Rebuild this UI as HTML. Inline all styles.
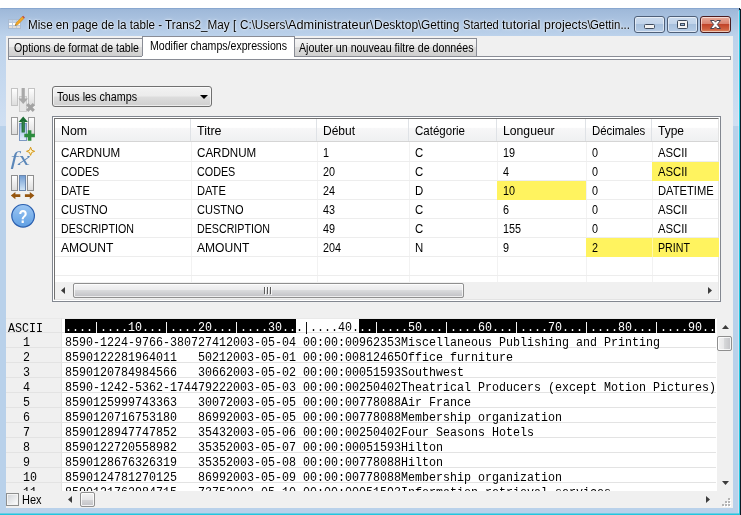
<!DOCTYPE html>
<html><head><meta charset="utf-8">
<style>
*{box-sizing:border-box;margin:0;padding:0}
html,body{width:741px;height:515px;overflow:hidden;background:#fff}
body{position:relative;font-family:"Liberation Sans",sans-serif;font-size:12px;color:#000}
.abs{position:absolute}
#win{will-change:transform;left:0;top:8px;width:741px;height:507px;background:#b9d1ea;border-radius:1px 3px 0 0;overflow:hidden}
#tbar{left:0;top:0;width:741px;height:120px;background:linear-gradient(#9db7d8 0,#bcd2eb 28px,#cfdff2 116px,#cfdff2 118px,#b9d1ea 118px)}
#client{left:6px;top:28px;width:727px;height:472px;background:#f0f0f0;overflow:hidden}
.cb{top:8px;width:31px;height:17px;border:1px solid #4f6079;border-radius:3px;box-shadow:inset 0 0 0 1px rgba(255,255,255,.55);background:linear-gradient(#cbdbee 0,#c2d4ea 45%,#a7c0dd 50%,#b6cce6 100%)}
.cb svg{position:absolute;left:0;top:0}
.tab{top:2px;height:19px;border:1px solid #898c95;border-bottom-color:#898c95;background:linear-gradient(#f5f5f5 0,#ebebeb 50%,#dddddd 50%,#cfcfcf 100%)}
.tab.sel{top:0;height:23px;background:#fff;border-bottom:none;z-index:2}
.t{white-space:pre;transform-origin:0 50%;z-index:3}
.mono{font-family:"Liberation Mono",monospace}
svg{display:block}
</style></head><body>
<div id="win" class="abs">
 <div id="tbar" class="abs"></div>
 <div class="abs" style="left:0;top:0;width:741px;height:1px;background:rgba(120,155,200,.55)"></div>
 <svg class="abs" style="left:8px;top:7px" width="18" height="16" viewBox="0 0 18 16">
  <rect x="0.5" y="4.5" width="12" height="9" fill="#fff" stroke="#a9bbd2"/>
  <rect x="1" y="5" width="11" height="2" fill="#c3d4ea"/>
  <rect x="1" y="11" width="11" height="2" fill="#e3ddd6"/>
  <path d="M4.5 5v8M8.5 5v8M1 7.5h11M1 10.5h11" stroke="#bccadc" fill="none"/>
  <path d="M7.2 10.6l.8-2.6L14.2 1.6l1.8 1.8L9.8 9.8z" fill="#f3a626" stroke="#c08418" stroke-width=".5"/>
  <path d="M14.2 1.6l.9-.9 1.8 1.8-.9.9z" fill="#c4453a"/>
  <path d="M7.2 10.6l.45-1.4.95.95z" fill="#555"/>
 </svg>
 <div class="abs cb" style="left:634px"><svg width="29" height="15"><rect x="9.5" y="7.5" width="10" height="4" rx="1" fill="#f2f2f2" stroke="#3e4a5c"/></svg></div>
 <div class="abs cb" style="left:667px"><svg width="29" height="15"><rect x="9.5" y="3.5" width="10" height="8" rx="1" fill="#f2f2f2" stroke="#3e4a5c"/><rect x="12.5" y="6.5" width="4" height="2" fill="#9db8d8" stroke="#3e4a5c"/></svg></div>
 <div class="abs cb" style="left:700px;background:linear-gradient(#e9ac9c 0,#d98371 45%,#c1442a 50%,#cf5f3f 80%,#dc8a62 100%);border-color:#4b1c20"><svg width="29" height="15"><path d="M9.5 3.5h3.6l1.4 1.7 1.4-1.7h3.6l-3.2 4 3.2 4h-3.6l-1.4-1.7-1.4 1.7h-3.6l3.2-4z" fill="#fff" stroke="#4a4350" stroke-width="1" stroke-linejoin="round"/></svg></div>
 <div id="client" class="abs">
<div class="abs " style="left:2px;top:20px;width:723px;height:4px;border:1px solid #898c95;background:#fff"></div>
<div class="abs tab" style="left:2px;top:2px;width:135px;height:19px;"></div>
<div class="abs tab" style="left:288px;top:2px;width:183px;height:19px;"></div>
<div class="abs tab sel" style="left:136px;top:0px;width:153px;height:21px;"></div>
<div class="abs " style="left:136px;top:20px;width:152px;height:3px;background:#fff;z-index:2"></div>
<div class="abs t" style="left:7.60px;top:4.84px;font-size:12px;line-height:15px;transform:scaleX(0.8839);">Options de format de table</div>
<div class="abs t" style="left:144.20px;top:2.84px;font-size:12px;line-height:15px;transform:scaleX(0.8816);">Modifier champs/expressions</div>
<div class="abs t" style="left:292.80px;top:4.84px;font-size:12px;line-height:15px;transform:scaleX(0.8896);">Ajouter un nouveau filtre de données</div>
<div class="abs " style="left:46px;top:50px;width:160px;height:21px;border:1px solid #707070;border-radius:3px;box-shadow:inset 0 0 0 1px rgba(255,255,255,.6);background:linear-gradient(#f2f2f2 0,#ebebeb 48%,#dddddd 52%,#cfcfcf 100%)"><svg class="abs" style="left:147px;top:8px" width="9" height="5"><path d="M0 0h8L4 4z" fill="#000"/></svg></div>
<div class="abs t" style="left:50.60px;top:53.84px;font-size:12px;line-height:15px;transform:scaleX(0.8951);">Tous les champs</div>
<svg class="abs" style="left:2px;top:48px" width="32" height="148" viewBox="8 84 32 148"><defs><linearGradient id="gb" x1="0" y1="0" x2="0" y2="1"><stop offset="0" stop-color="#fff"/><stop offset="1" stop-color="#dcdcdc"/></linearGradient><linearGradient id="bl" x1="0" y1="0" x2="0" y2="1"><stop offset="0" stop-color="#8fb2de"/><stop offset="1" stop-color="#e4effa"/></linearGradient><linearGradient id="bl2" x1="0" y1="0" x2="0" y2="1"><stop offset="0" stop-color="#6f9bd1"/><stop offset="1" stop-color="#d3e6f6"/></linearGradient><linearGradient id="hp" x1="0" y1="0" x2="0" y2="1"><stop offset="0" stop-color="#9cc6f3"/><stop offset="1" stop-color="#5f9fe3"/></linearGradient></defs>
<rect x="11.5" y="88.5" width="6" height="17" fill="url(#gb)" stroke="#c3c3c3"/><rect x="28.5" y="88.5" width="6" height="17" fill="url(#gb)" stroke="#c3c3c3"/>
<rect x="19.5" y="96.5" width="7" height="15" fill="#e6e6e6" stroke="#cdcdcd"/>
<path d="M21.6 88h3.2v10.6h3.2l-4.8 5.4-4.8-5.4h3.2z" fill="#a9a9a9"/>
<path d="M27.2 104.2l6.6 6.6M33.8 104.2l-6.6 6.6" stroke="#a3a3a3" stroke-width="3.1" fill="none"/>
<rect x="11.5" y="117.5" width="6" height="17" fill="url(#gb)" stroke="#9a9a9a"/><rect x="28.5" y="117.5" width="6" height="17" fill="url(#gb)" stroke="#9a9a9a"/>
<rect x="19.5" y="123.5" width="7" height="17" fill="url(#bl)" stroke="#7b98c2"/>
<path d="M23.2 116.6l4.7 5.4h-3.1v10.6h-3.2v-10.6h-3.1z" fill="#1b6d33"/><path d="M23.2 121v11" stroke="#3f8f55" stroke-width="1"/>
<path d="M29.6 130.2v10.6M24.3 135.5h10.6" stroke="#2c8c3e" stroke-width="3.6" fill="none"/>
<text x="10.5" y="164.5" font-family="Liberation Serif,serif" font-style="italic" font-size="19" fill="#5a86b8" textLength="19.5" lengthAdjust="spacingAndGlyphs">fx</text>
<path d="M30.6 147.2l1.1 3 3 1.1-3 1.1-1.1 3-1.1-3-3-1.1 3-1.1z" fill="#fff6cf" stroke="#d79a1c" stroke-width="1"/>
<rect x="11.5" y="175.5" width="6" height="15" fill="url(#gb)" stroke="#8e8e8e"/><rect x="27.5" y="175.5" width="6" height="15" fill="url(#gb)" stroke="#8e8e8e"/>
<rect x="19.5" y="175.5" width="6" height="15" fill="url(#bl2)" stroke="#6a86ad"/>
<path d="M10.8 195.6l4.6-3.7v2.3h4.9v2.8h-4.9v2.3z" fill="#96560f"/><path d="M34.4 195.6l-4.6-3.7v2.3h-4.9v2.8h4.9v2.3z" fill="#96560f"/>
<circle cx="23.1" cy="215.8" r="11.3" fill="url(#hp)" stroke="#2b5fae" stroke-width="1.2"/>
<text x="23.1" y="222.6" text-anchor="middle" font-family="Liberation Sans,sans-serif" font-weight="bold" font-size="18.5" fill="#fff" transform="translate(23.1 0) scale(.8 1) translate(-23.1 0)">?</text>
</svg>
<div class="abs " style="left:46px;top:80px;width:669px;height:186px;border:1px solid #828790;background:#fff"></div>
<div class="abs " style="left:48px;top:82px;width:665px;height:182px;border:1px solid #e3e3e3;border-left-color:#717171;border-top-color:#717171;background:#fff"></div>
<div class="abs " style="left:49px;top:83px;width:663px;height:23px;background:linear-gradient(#fff 0,#fff 38%,#f7f7f8 42%,#eff0f1 100%);border-bottom:1px solid #d5d5d5"></div>
<div class="abs t" style="left:54.80px;top:88.34px;font-size:12px;line-height:15px;transform:scaleX(1.0298);">Nom</div>
<div class="abs t" style="left:190.50px;top:88.34px;font-size:12px;line-height:15px;transform:scaleX(1.0398);">Titre</div>
<div class="abs " style="left:184px;top:83px;width:1px;height:22px;background:#dfe2e6"></div>
<div class="abs " style="left:185px;top:106px;width:1px;height:140px;background:#f2f2f2"></div>
<div class="abs t" style="left:316.50px;top:88.34px;font-size:12px;line-height:15px;transform:scaleX(1.0021);">Début</div>
<div class="abs " style="left:310px;top:83px;width:1px;height:22px;background:#dfe2e6"></div>
<div class="abs " style="left:311px;top:106px;width:1px;height:140px;background:#f2f2f2"></div>
<div class="abs t" style="left:408.50px;top:88.34px;font-size:12px;line-height:15px;transform:scaleX(0.9610);">Catégorie</div>
<div class="abs " style="left:402px;top:83px;width:1px;height:22px;background:#dfe2e6"></div>
<div class="abs " style="left:403px;top:106px;width:1px;height:140px;background:#f2f2f2"></div>
<div class="abs t" style="left:496.50px;top:88.34px;font-size:12px;line-height:15px;transform:scaleX(1.0174);">Longueur</div>
<div class="abs " style="left:490px;top:83px;width:1px;height:22px;background:#dfe2e6"></div>
<div class="abs " style="left:491px;top:106px;width:1px;height:140px;background:#f2f2f2"></div>
<div class="abs t" style="left:585.50px;top:88.34px;font-size:12px;line-height:15px;transform:scaleX(0.9515);">Décimales</div>
<div class="abs " style="left:579px;top:83px;width:1px;height:22px;background:#dfe2e6"></div>
<div class="abs " style="left:580px;top:106px;width:1px;height:140px;background:#f2f2f2"></div>
<div class="abs t" style="left:651.50px;top:88.34px;font-size:12px;line-height:15px;transform:scaleX(0.9994);">Type</div>
<div class="abs " style="left:645px;top:83px;width:1px;height:22px;background:#dfe2e6"></div>
<div class="abs " style="left:646px;top:106px;width:1px;height:140px;background:#f2f2f2"></div>
<div class="abs t" style="left:54.80px;top:110.34px;font-size:12px;line-height:15px;transform:scaleX(0.9667);">CARDNUM</div>
<div class="abs t" style="left:190.50px;top:110.34px;font-size:12px;line-height:15px;transform:scaleX(0.9667);">CARDNUM</div>
<div class="abs t" style="left:316.50px;top:110.34px;font-size:12px;line-height:15px;transform:scaleX(0.9000);">1</div>
<div class="abs t" style="left:408.50px;top:110.34px;font-size:12px;line-height:15px;transform:scaleX(0.9500);">C</div>
<div class="abs t" style="left:496.50px;top:110.34px;font-size:12px;line-height:15px;transform:scaleX(0.9000);">19</div>
<div class="abs t" style="left:585.50px;top:110.34px;font-size:12px;line-height:15px;transform:scaleX(0.9000);">0</div>
<div class="abs t" style="left:651.50px;top:110.34px;font-size:12px;line-height:15px;transform:scaleX(0.9412);">ASCII</div>
<div class="abs " style="left:646px;top:126px;width:67px;height:19px;background:#fff35f;z-index:1"></div>
<div class="abs t" style="left:54.80px;top:129.34px;font-size:12px;line-height:15px;transform:scaleX(0.8972);">CODES</div>
<div class="abs t" style="left:190.50px;top:129.34px;font-size:12px;line-height:15px;transform:scaleX(0.8972);">CODES</div>
<div class="abs t" style="left:316.50px;top:129.34px;font-size:12px;line-height:15px;transform:scaleX(0.9000);">20</div>
<div class="abs t" style="left:408.50px;top:129.34px;font-size:12px;line-height:15px;transform:scaleX(0.9500);">C</div>
<div class="abs t" style="left:496.50px;top:129.34px;font-size:12px;line-height:15px;transform:scaleX(0.9000);">4</div>
<div class="abs t" style="left:585.50px;top:129.34px;font-size:12px;line-height:15px;transform:scaleX(0.9000);">0</div>
<div class="abs t" style="left:651.50px;top:129.34px;font-size:12px;line-height:15px;transform:scaleX(0.9412);">ASCII</div>
<div class="abs " style="left:491px;top:145px;width:89px;height:19px;background:#fff35f;z-index:1"></div>
<div class="abs t" style="left:54.80px;top:148.34px;font-size:12px;line-height:15px;transform:scaleX(0.9253);">DATE</div>
<div class="abs t" style="left:190.50px;top:148.34px;font-size:12px;line-height:15px;transform:scaleX(0.9253);">DATE</div>
<div class="abs t" style="left:316.50px;top:148.34px;font-size:12px;line-height:15px;transform:scaleX(0.9000);">24</div>
<div class="abs t" style="left:408.50px;top:148.34px;font-size:12px;line-height:15px;transform:scaleX(0.9500);">D</div>
<div class="abs t" style="left:496.50px;top:148.34px;font-size:12px;line-height:15px;transform:scaleX(0.9000);">10</div>
<div class="abs t" style="left:585.50px;top:148.34px;font-size:12px;line-height:15px;transform:scaleX(0.9000);">0</div>
<div class="abs t" style="left:651.50px;top:148.34px;font-size:12px;line-height:15px;transform:scaleX(0.9317);">DATETIME</div>
<div class="abs t" style="left:54.80px;top:167.34px;font-size:12px;line-height:15px;transform:scaleX(0.9196);">CUSTNO</div>
<div class="abs t" style="left:190.50px;top:167.34px;font-size:12px;line-height:15px;transform:scaleX(0.9196);">CUSTNO</div>
<div class="abs t" style="left:316.50px;top:167.34px;font-size:12px;line-height:15px;transform:scaleX(0.9000);">43</div>
<div class="abs t" style="left:408.50px;top:167.34px;font-size:12px;line-height:15px;transform:scaleX(0.9500);">C</div>
<div class="abs t" style="left:496.50px;top:167.34px;font-size:12px;line-height:15px;transform:scaleX(0.9000);">6</div>
<div class="abs t" style="left:585.50px;top:167.34px;font-size:12px;line-height:15px;transform:scaleX(0.9000);">0</div>
<div class="abs t" style="left:651.50px;top:167.34px;font-size:12px;line-height:15px;transform:scaleX(0.9412);">ASCII</div>
<div class="abs t" style="left:54.80px;top:186.34px;font-size:12px;line-height:15px;transform:scaleX(0.8889);">DESCRIPTION</div>
<div class="abs t" style="left:190.50px;top:186.34px;font-size:12px;line-height:15px;transform:scaleX(0.8889);">DESCRIPTION</div>
<div class="abs t" style="left:316.50px;top:186.34px;font-size:12px;line-height:15px;transform:scaleX(0.9000);">49</div>
<div class="abs t" style="left:408.50px;top:186.34px;font-size:12px;line-height:15px;transform:scaleX(0.9500);">C</div>
<div class="abs t" style="left:496.50px;top:186.34px;font-size:12px;line-height:15px;transform:scaleX(0.9000);">155</div>
<div class="abs t" style="left:585.50px;top:186.34px;font-size:12px;line-height:15px;transform:scaleX(0.9000);">0</div>
<div class="abs t" style="left:651.50px;top:186.34px;font-size:12px;line-height:15px;transform:scaleX(0.9412);">ASCII</div>
<div class="abs " style="left:580px;top:202px;width:66px;height:19px;background:#fff35f;z-index:1"></div>
<div class="abs " style="left:646px;top:202px;width:67px;height:19px;background:#fff35f;z-index:1"></div>
<div class="abs " style="left:646px;top:202px;width:1px;height:19px;background:rgba(255,255,255,.45);z-index:2"></div>
<div class="abs t" style="left:54.80px;top:205.34px;font-size:12px;line-height:15px;transform:scaleX(1.0058);">AMOUNT</div>
<div class="abs t" style="left:190.50px;top:205.34px;font-size:12px;line-height:15px;transform:scaleX(1.0058);">AMOUNT</div>
<div class="abs t" style="left:316.50px;top:205.34px;font-size:12px;line-height:15px;transform:scaleX(0.9000);">204</div>
<div class="abs t" style="left:408.50px;top:205.34px;font-size:12px;line-height:15px;transform:scaleX(0.9500);">N</div>
<div class="abs t" style="left:496.50px;top:205.34px;font-size:12px;line-height:15px;transform:scaleX(0.9000);">9</div>
<div class="abs t" style="left:585.50px;top:205.34px;font-size:12px;line-height:15px;transform:scaleX(0.9000);">2</div>
<div class="abs t" style="left:651.50px;top:205.34px;font-size:12px;line-height:15px;transform:scaleX(0.8889);">PRINT</div>
<div class="abs " style="left:49px;top:125px;width:663px;height:1px;background:#ededed"></div>
<div class="abs " style="left:49px;top:144px;width:663px;height:1px;background:#ededed"></div>
<div class="abs " style="left:49px;top:163px;width:663px;height:1px;background:#ededed"></div>
<div class="abs " style="left:49px;top:182px;width:663px;height:1px;background:#ededed"></div>
<div class="abs " style="left:49px;top:201px;width:663px;height:1px;background:#ededed"></div>
<div class="abs " style="left:49px;top:220px;width:663px;height:1px;background:#ededed"></div>
<div class="abs " style="left:49px;top:239px;width:663px;height:1px;background:#ededed"></div>
<div class="abs " style="left:49px;top:258px;width:663px;height:1px;background:#ededed"></div>
<div class="abs " style="left:49px;top:246px;width:663px;height:17px;background:#f0f0f0"></div>
<div class="abs " style="left:67px;top:247px;width:391px;height:15px;border:1px solid #8f8f8f;border-radius:2px;box-shadow:inset 0 0 0 1px rgba(255,255,255,.7);background:linear-gradient(#f5f5f5 0,#e9e9eb 50%,#d9dadc 50%,#c0c0c4 100%)"></div>
<div class="abs " style="left:55px;top:251px;width:4px;height:7px;"><svg width="4" height="7"><path d="M4 0v7L0 3.5z" fill="#3c3c3c"/></svg></div>
<div class="abs " style="left:702px;top:251px;width:4px;height:7px;"><svg width="4" height="7"><path d="M0 0v7L4 3.5z" fill="#3c3c3c"/></svg></div>
<div class="abs " style="left:258px;top:251px;width:9px;height:8px;"><svg width="9" height="8"><path d="M1.5 0v8M4.5 0v8M7.5 0v8" stroke="#fff" stroke-width="1" opacity=".8"/><path d="M0.5 0v7M3.5 0v7M6.5 0v7" stroke="#5c5c5c" stroke-width="1"/></svg></div>
<div class="abs " style="left:0px;top:282px;width:712px;height:173px;background:#fff"></div>
<div class="abs " style="left:0px;top:282px;width:55px;height:173px;background:#f0f0f0"></div>
<div class="abs " style="left:59px;top:283px;width:231px;height:14px;background:#000;z-index:2"></div>
<div class="abs " style="left:353px;top:283px;width:356px;height:14px;background:#000;z-index:2"></div>
<div class="abs " style="left:59px;top:282px;width:651px;height:16px;overflow:hidden;z-index:3"><div class="abs t mono" style="left:0;top:2.67px;font-size:12.5px;line-height:15px;color:#fff;transform:scaleX(0.9333)">....|....10...|....20...|....30..<span style="color:#000">.|....40.</span>..|....50...|....60...|....70...|....80...|....90..</div></div>
<div class="abs t" style="left:2.00px;top:284.67px;font-size:12.5px;line-height:16px;transform:scaleX(0.9333);font-family:'Liberation Mono',monospace">ASCII</div>
<div class="abs t" style="left:59.00px;top:299.17px;font-size:12.5px;line-height:16px;transform:scaleX(0.9333);font-family:'Liberation Mono',monospace">8590-1224-9766-380727412003-05-04 00:00:00962353Miscellaneous Publishing and Printing</div>
<div class="abs t" style="left:17.00px;top:299.17px;font-size:12.5px;line-height:16px;transform:scaleX(0.9333);font-family:'Liberation Mono',monospace">1</div>
<div class="abs t" style="left:59.00px;top:314.17px;font-size:12.5px;line-height:16px;transform:scaleX(0.9333);font-family:'Liberation Mono',monospace">8590122281964011   50212003-05-01 00:00:00812465Office furniture</div>
<div class="abs t" style="left:17.00px;top:314.17px;font-size:12.5px;line-height:16px;transform:scaleX(0.9333);font-family:'Liberation Mono',monospace">2</div>
<div class="abs t" style="left:59.00px;top:329.17px;font-size:12.5px;line-height:16px;transform:scaleX(0.9333);font-family:'Liberation Mono',monospace">8590120784984566   30662003-05-02 00:00:00051593Southwest</div>
<div class="abs t" style="left:17.00px;top:329.17px;font-size:12.5px;line-height:16px;transform:scaleX(0.9333);font-family:'Liberation Mono',monospace">3</div>
<div class="abs t" style="left:59.00px;top:344.17px;font-size:12.5px;line-height:16px;transform:scaleX(0.9333);font-family:'Liberation Mono',monospace">8590-1242-5362-174479222003-05-03 00:00:00250402Theatrical Producers (except Motion Pictures)</div>
<div class="abs t" style="left:17.00px;top:344.17px;font-size:12.5px;line-height:16px;transform:scaleX(0.9333);font-family:'Liberation Mono',monospace">4</div>
<div class="abs t" style="left:59.00px;top:359.17px;font-size:12.5px;line-height:16px;transform:scaleX(0.9333);font-family:'Liberation Mono',monospace">8590125999743363   30072003-05-05 00:00:00778088Air France</div>
<div class="abs t" style="left:17.00px;top:359.17px;font-size:12.5px;line-height:16px;transform:scaleX(0.9333);font-family:'Liberation Mono',monospace">5</div>
<div class="abs t" style="left:59.00px;top:374.17px;font-size:12.5px;line-height:16px;transform:scaleX(0.9333);font-family:'Liberation Mono',monospace">8590120716753180   86992003-05-05 00:00:00778088Membership organization</div>
<div class="abs t" style="left:17.00px;top:374.17px;font-size:12.5px;line-height:16px;transform:scaleX(0.9333);font-family:'Liberation Mono',monospace">6</div>
<div class="abs t" style="left:59.00px;top:389.17px;font-size:12.5px;line-height:16px;transform:scaleX(0.9333);font-family:'Liberation Mono',monospace">8590128947747852   35432003-05-06 00:00:00250402Four Seasons Hotels</div>
<div class="abs t" style="left:17.00px;top:389.17px;font-size:12.5px;line-height:16px;transform:scaleX(0.9333);font-family:'Liberation Mono',monospace">7</div>
<div class="abs t" style="left:59.00px;top:404.17px;font-size:12.5px;line-height:16px;transform:scaleX(0.9333);font-family:'Liberation Mono',monospace">8590122720558982   35352003-05-07 00:00:00051593Hilton</div>
<div class="abs t" style="left:17.00px;top:404.17px;font-size:12.5px;line-height:16px;transform:scaleX(0.9333);font-family:'Liberation Mono',monospace">8</div>
<div class="abs t" style="left:59.00px;top:419.17px;font-size:12.5px;line-height:16px;transform:scaleX(0.9333);font-family:'Liberation Mono',monospace">8590128676326319   35352003-05-08 00:00:00778088Hilton</div>
<div class="abs t" style="left:17.00px;top:419.17px;font-size:12.5px;line-height:16px;transform:scaleX(0.9333);font-family:'Liberation Mono',monospace">9</div>
<div class="abs t" style="left:59.00px;top:434.17px;font-size:12.5px;line-height:16px;transform:scaleX(0.9333);font-family:'Liberation Mono',monospace">8590124781270125   86992003-05-09 00:00:00778088Membership organization</div>
<div class="abs t" style="left:17.00px;top:434.17px;font-size:12.5px;line-height:16px;transform:scaleX(0.9333);font-family:'Liberation Mono',monospace">10</div>
<div class="abs " style="left:0px;top:447px;width:710px;height:8px;overflow:hidden;z-index:3"><div class="abs t mono" style="left:59px;top:2.67px;font-size:12.5px;line-height:15px;transform:scaleX(0.9333)">8590121762984715   73752003-05-10 00:00:00051593Information retrieval services</div><div class="abs t mono" style="left:17px;top:2.67px;font-size:12.5px;line-height:15px;transform:scaleX(0.9333)">11</div></div>
<div class="abs " style="left:0px;top:296px;width:710px;height:1px;background:#e3e3e3"></div>
<div class="abs " style="left:0px;top:311px;width:710px;height:1px;background:#e3e3e3"></div>
<div class="abs " style="left:0px;top:326px;width:710px;height:1px;background:#e3e3e3"></div>
<div class="abs " style="left:0px;top:341px;width:710px;height:1px;background:#e3e3e3"></div>
<div class="abs " style="left:0px;top:356px;width:710px;height:1px;background:#e3e3e3"></div>
<div class="abs " style="left:0px;top:371px;width:710px;height:1px;background:#e3e3e3"></div>
<div class="abs " style="left:0px;top:386px;width:710px;height:1px;background:#e3e3e3"></div>
<div class="abs " style="left:0px;top:401px;width:710px;height:1px;background:#e3e3e3"></div>
<div class="abs " style="left:0px;top:416px;width:710px;height:1px;background:#e3e3e3"></div>
<div class="abs " style="left:0px;top:431px;width:710px;height:1px;background:#e3e3e3"></div>
<div class="abs " style="left:0px;top:446px;width:710px;height:1px;background:#e3e3e3"></div>
<div class="abs " style="left:0px;top:282px;width:710px;height:1px;background:#e9e9e9"></div>
<div class="abs " style="left:55px;top:282px;width:1px;height:173px;background:#e3e3e3"></div>
<div class="abs " style="left:711px;top:282px;width:16px;height:173px;background:#f0f0f0"></div>
<div class="abs " style="left:711px;top:300px;width:15px;height:15px;border:1px solid #8f8f8f;border-radius:2px;box-shadow:inset 0 0 0 1px rgba(255,255,255,.8);background:linear-gradient(90deg,#f3f3f3 0,#e6e6e8 50%,#d6d7d9 50%,#c2c2c6 100%)"></div>
<div class="abs " style="left:716px;top:289px;width:7px;height:4px;"><svg width="7" height="4"><path d="M0 4h7L3.5 0z" fill="#3c3c3c"/></svg></div>
<div class="abs " style="left:716px;top:445px;width:7px;height:4px;"><svg width="7" height="4"><path d="M0 0h7L3.5 4z" fill="#3c3c3c"/></svg></div>
<div class="abs " style="left:0px;top:455px;width:727px;height:17px;background:#f0f0f0"></div>
<div class="abs " style="left:0px;top:457px;width:13px;height:13px;border:1px solid #8e8f8f;box-shadow:inset 0 0 0 1px #f4f4f4;background:linear-gradient(135deg,#cfd2d6,#fff)"></div>
<div class="abs t" style="left:16.20px;top:457.34px;font-size:12px;line-height:15px;transform:scaleX(0.9136);">Hex</div>
<div class="abs " style="left:62px;top:460px;width:4px;height:7px;"><svg width="4" height="7"><path d="M4 0v7L0 3.5z" fill="#3c3c3c"/></svg></div>
<div class="abs " style="left:700px;top:460px;width:4px;height:7px;"><svg width="4" height="7"><path d="M0 0v7L4 3.5z" fill="#3c3c3c"/></svg></div>
<div class="abs " style="left:74px;top:456px;width:15px;height:15px;border:1px solid #8f8f8f;border-radius:2px;box-shadow:inset 0 0 0 1px rgba(255,255,255,.8);background:linear-gradient(#f3f3f3 0,#e6e6e8 50%,#d6d7d9 50%,#c2c2c6 100%)"></div>
<div class="abs " style="left:716px;top:461px;width:10px;height:10px;"><svg width="10" height="10"><g fill="#fff"><rect x="7" y="2" width="2" height="2"/><rect x="4" y="5" width="2" height="2"/><rect x="7" y="5" width="2" height="2"/><rect x="1" y="8" width="2" height="2"/><rect x="4" y="8" width="2" height="2"/><rect x="7" y="8" width="2" height="2"/></g><g fill="#b4b4b4"><rect x="6" y="1" width="2" height="2"/><rect x="3" y="4" width="2" height="2"/><rect x="6" y="4" width="2" height="2"/><rect x="0" y="7" width="2" height="2"/><rect x="3" y="7" width="2" height="2"/><rect x="6" y="7" width="2" height="2"/></g></svg></div>
 </div>
<div class="abs" style="left:6px;top:28px;width:0;height:0"><div class="abs t" style="left:21.90px;top:-17.86px;font-size:12px;line-height:15px;transform:scaleX(0.9716);text-shadow:0 0 1px rgba(255,255,255,.7),0 0 2px rgba(255,255,255,.6),0 0 3px rgba(255,255,255,.5),0 0 5px rgba(255,255,255,.35)">Mise en page de la table - </div>
<div class="abs t" style="left:159.30px;top:-17.86px;font-size:12px;line-height:15px;transform:scaleX(0.9770);text-shadow:0 0 1px rgba(255,255,255,.7),0 0 2px rgba(255,255,255,.6),0 0 3px rgba(255,255,255,.5),0 0 5px rgba(255,255,255,.35)">Trans2_May [ </div>
<div class="abs t" style="left:233.80px;top:-17.86px;font-size:12px;line-height:15px;transform:scaleX(0.9697);text-shadow:0 0 1px rgba(255,255,255,.7),0 0 2px rgba(255,255,255,.6),0 0 3px rgba(255,255,255,.5),0 0 5px rgba(255,255,255,.35)">C:\Users\</div>
<div class="abs t" style="left:282.30px;top:-17.86px;font-size:12px;line-height:15px;transform:scaleX(1.0594);text-shadow:0 0 1px rgba(255,255,255,.7),0 0 2px rgba(255,255,255,.6),0 0 3px rgba(255,255,255,.5),0 0 5px rgba(255,255,255,.35)">Administrateur\</div>
<div class="abs t" style="left:367.80px;top:-17.86px;font-size:12px;line-height:15px;transform:scaleX(1.0009);text-shadow:0 0 1px rgba(255,255,255,.7),0 0 2px rgba(255,255,255,.6),0 0 3px rgba(255,255,255,.5),0 0 5px rgba(255,255,255,.35)">Desktop\</div>
<div class="abs t" style="left:415.20px;top:-17.86px;font-size:12px;line-height:15px;transform:scaleX(0.9897);text-shadow:0 0 1px rgba(255,255,255,.7),0 0 2px rgba(255,255,255,.6),0 0 3px rgba(255,255,255,.5),0 0 5px rgba(255,255,255,.35)">Getting </div>
<div class="abs t" style="left:456.80px;top:-17.86px;font-size:12px;line-height:15px;transform:scaleX(0.9231);text-shadow:0 0 1px rgba(255,255,255,.7),0 0 2px rgba(255,255,255,.6),0 0 3px rgba(255,255,255,.5),0 0 5px rgba(255,255,255,.35)">Started </div>
<div class="abs t" style="left:495.60px;top:-17.86px;font-size:12px;line-height:15px;transform:scaleX(1.0645);text-shadow:0 0 1px rgba(255,255,255,.7),0 0 2px rgba(255,255,255,.6),0 0 3px rgba(255,255,255,.5),0 0 5px rgba(255,255,255,.35)">tutorial </div>
<div class="abs t" style="left:537.50px;top:-17.86px;font-size:12px;line-height:15px;transform:scaleX(1.0340);text-shadow:0 0 1px rgba(255,255,255,.7),0 0 2px rgba(255,255,255,.6),0 0 3px rgba(255,255,255,.5),0 0 5px rgba(255,255,255,.35)">projects\</div>
<div class="abs t" style="left:584.40px;top:-17.86px;font-size:12px;line-height:15px;transform:scaleX(0.9493);text-shadow:0 0 1px rgba(255,255,255,.7),0 0 2px rgba(255,255,255,.6),0 0 3px rgba(255,255,255,.5),0 0 5px rgba(255,255,255,.35)">Gettin...</div>
</div>
<div class="abs" style="left:0;top:505px;width:741px;height:1px;background:#6ccbe3"></div>
<div class="abs" style="left:0;top:506px;width:741px;height:1px;background:#22c6de"></div>
<div class="abs" style="left:738px;top:3px;width:1px;height:502px;background:rgba(255,255,255,.3)"></div>
<div class="abs" style="left:739px;top:2px;width:1px;height:505px;background:#22c6de"></div>
</div>
<div class="abs" style="left:740px;top:9px;width:1px;height:506px;background:#0a1a24"></div><div class="abs" style="left:739px;top:8px;width:1px;height:2px;background:#0a1a24"></div>
</body></html>
